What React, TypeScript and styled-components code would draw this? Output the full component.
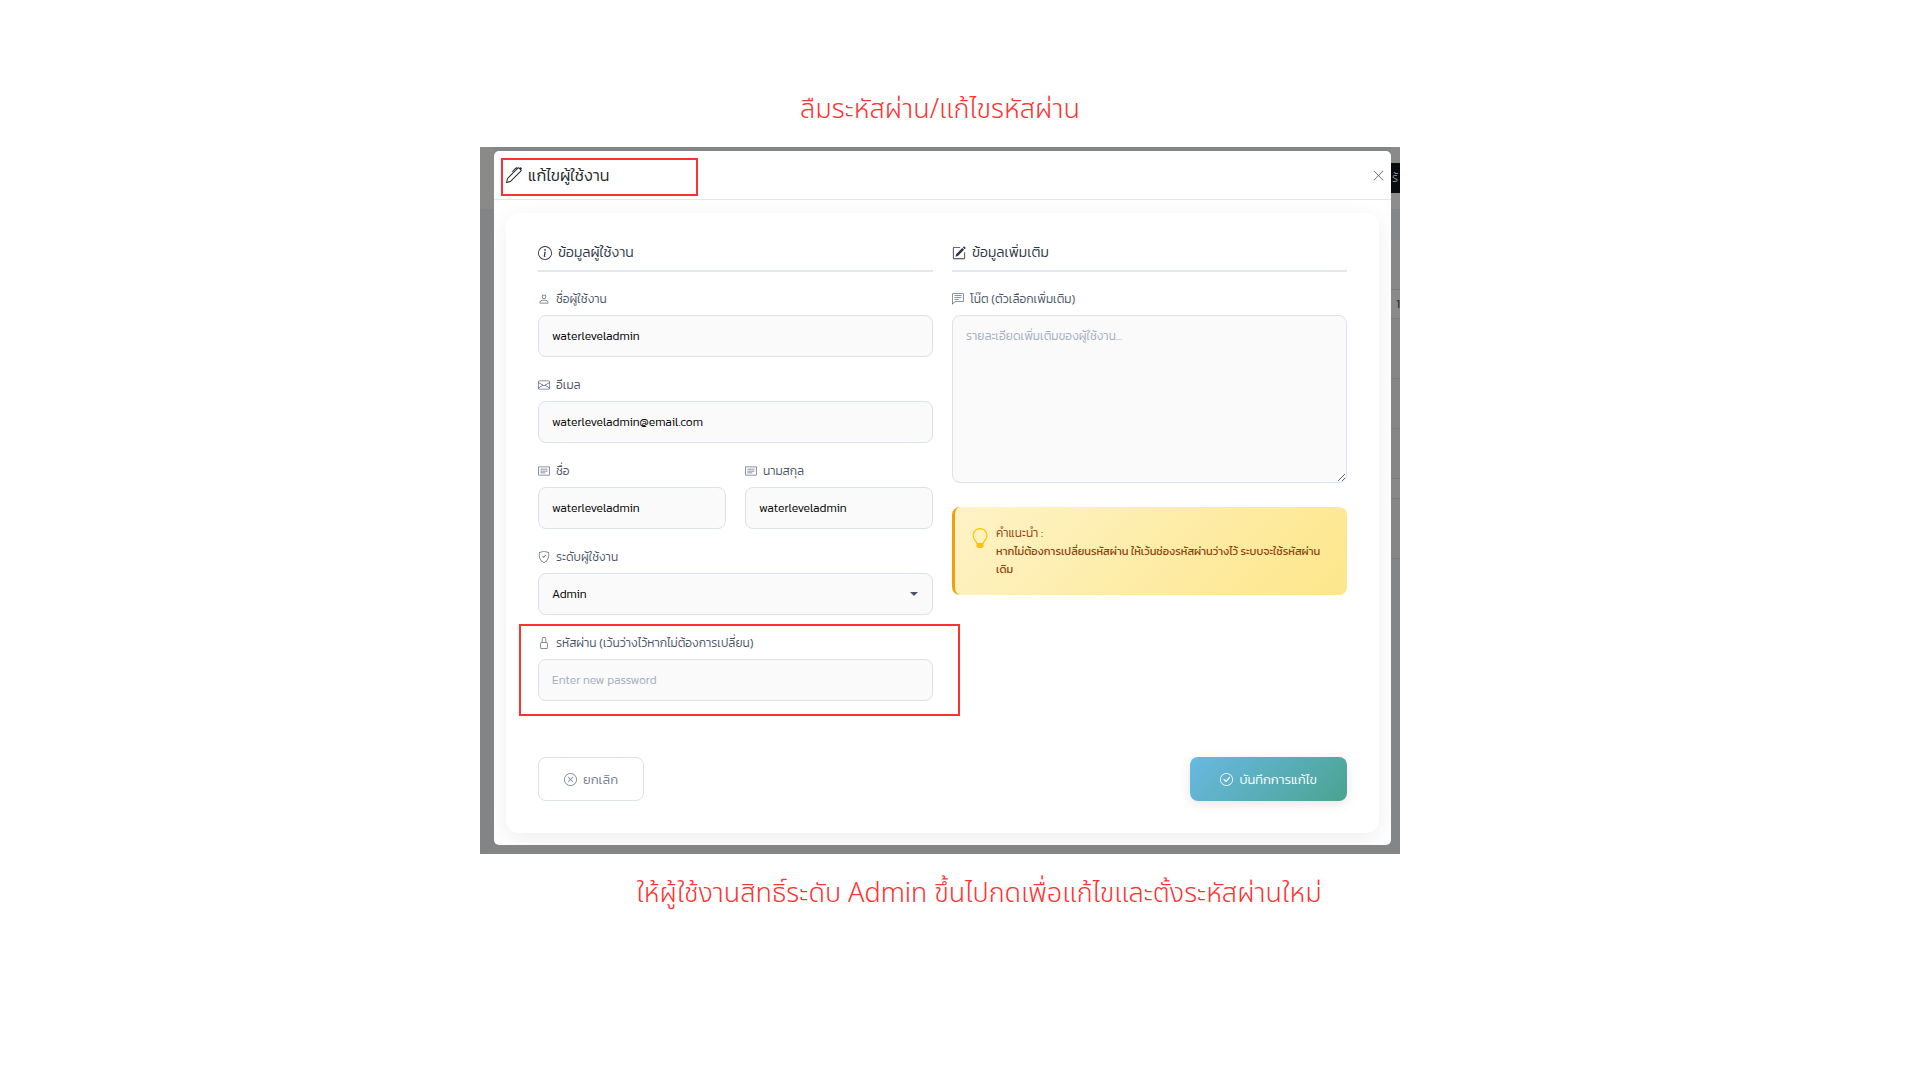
import React, { useState } from 'react';
import styled, { createGlobalStyle } from 'styled-components';
import {
  BsCardText,
  BsChatLeftText,
  BsCheckCircle,
  BsEnvelope,
  BsInfoCircle,
  BsLightbulb,
  BsLock,
  BsPen,
  BsPencilSquare,
  BsPerson,
  BsShieldCheck,
  BsXCircle,
  BsXLg,
} from 'react-icons/bs';

const uiFont = `Kanit, 'Noto Sans Thai', 'Noto Sans', sans-serif`;
const captionFont = `'Noto Sans Thai', 'Noto Sans', sans-serif`;
const red = '#ff3131';

const GlobalStyle = createGlobalStyle`
  *, *::before, *::after { box-sizing: border-box; }
  body { margin: 0; background: #fff; font-family: ${uiFont}; font-weight: 300; }
  input, select, textarea, button { font-family: inherit; font-weight: inherit; }
`;

const Page = styled.main`
  display: flex;
  flex-direction: column;
  align-items: center;
  padding: 90px 40px 40px 0;
`;

const Caption = styled.p<{ $shift?: boolean }>`
  margin: 0;
  padding-left: ${({ $shift }) => ($shift ? '78px' : '0')};
  color: ${red};
  font-family: ${captionFont};
  font-size: 27px;
  font-weight: 350;
  line-height: 40px;
`;

const Backdrop = styled.section`
  display: flex;
  width: 100%;
  max-width: 920px;
  margin: 17px 0 20px;
  background: #848586;
`;

const LeftStrip = styled.div`
  flex: 0 0 14px;
  background: linear-gradient(#8a8a89 0 62px, #838485 62px);
`;

const RightStrip = styled.div`
  display: flex;
  flex: 0 0 9px;
  flex-direction: column;
`;

const StripCell = styled.div<{ $height: number; $color: string; $line?: boolean }>`
  display: flex;
  align-items: center;
  justify-content: flex-end;
  height: ${({ $height }) => $height}px;
  background: ${({ $color }) => $color};
  border-bottom: ${({ $line }) => ($line ? '1px solid #7c7c7c' : '0')};
  color: #333;
  font-size: 12px;
  font-weight: 400;
`;

const StripButton = styled.button`
  flex: none;
  height: 30px;
  padding: 0 0 0 1px;
  border: 0;
  background: #080c10;
  color: #8d8d8d;
  font-size: 12px;
  text-align: left;
`;

const Modal = styled.div`
  flex: 1;
  min-width: 0;
  margin: 4px 0 9px;
  overflow: hidden;
  border-radius: 5px;
  background: #fff;
`;

const Header = styled.header`
  display: flex;
  align-items: flex-start;
  justify-content: space-between;
  padding: 7px 6px 3px 7px;
  border-bottom: 1px solid #e4e6e9;
`;

const Title = styled.h1`
  display: flex;
  align-items: center;
  gap: 6px;
  width: 197px;
  height: 38px;
  margin: 0;
  padding: 0 3px 4px;
  border: 2px solid ${red};
  color: #212529;
  font-size: 16px;
  font-weight: 300;
`;

const CloseButton = styled.button`
  display: flex;
  padding: 11px 0;
  border: 0;
  background: none;
  color: #707070;
  font-size: 13px;
`;

const Card = styled.form`
  margin: 13px 12px 12px;
  padding: 29px 32px 32px;
  border-radius: 13px;
  background: #fff;
  box-shadow: 0 6px 24px rgba(0, 0, 0, 0.07);
`;

const Columns = styled.div`
  display: grid;
  grid-template-columns: 1fr 1fr;
  gap: 19px;
`;

const Column = styled.div`
  display: flex;
  flex-direction: column;
  gap: 18px;
  min-width: 0;
`;

const SectionTitle = styled.h2`
  display: flex;
  align-items: center;
  gap: 6px;
  margin: 0 0 -1px;
  padding-bottom: 6px;
  border-bottom: 2px solid #e2e8f0;
  color: #2d3748;
  font-size: 14px;
  font-weight: 300;
  line-height: 22px;
`;

const FieldBox = styled.div`
  position: relative;
  display: flex;
  flex-direction: column;
  gap: 6px;
  min-width: 0;
`;

const Label = styled.label`
  display: flex;
  align-items: center;
  gap: 6px;
  color: #4a5568;
  font-size: 12px;
  line-height: 20px;

  svg { color: #667085; }
`;

const controlStyle = `
  width: 100%;
  min-width: 0;
  border: 1px solid #d9e2ed;
  border-radius: 8px;
  background: #fafafa;
  color: #000;
  font-size: 12px;
  outline: none;
  &::placeholder { color: #a0aec0; opacity: 1; }
`;

const Input = styled.input`
  ${controlStyle}
  height: 42px;
  padding: 0 13px;
`;

const TextArea = styled.textarea`
  ${controlStyle}
  display: block;
  height: 168px;
  padding: 11px 13px;
  line-height: 18px;
  resize: vertical;
`;

const SelectBox = styled.div`
  display: grid;
  align-items: center;
  > * { grid-area: 1 / 1; }
`;

const Select = styled.select`
  ${controlStyle}
  height: 42px;
  padding: 0 13px;
  appearance: none;
`;

const Caret = styled.svg`
  justify-self: end;
  width: 8px;
  height: 4px;
  margin-right: 15px;
  pointer-events: none;
`;

const Highlight = styled.div`
  position: absolute;
  inset: -9px -27px -15px -19px;
  border: 2px solid ${red};
  pointer-events: none;
`;

const Tip = styled.aside`
  display: flex;
  gap: 6px;
  margin-top: 6px;
  padding: 17px 16px 17px 15px;
  border-left: 3px solid #f59e0b;
  border-radius: 8px;
  background: linear-gradient(135deg, #fef3c7, #fde68a) border-box;
  color: #92400e;
  font-size: 12px;
  line-height: 18px;
`;

const TipIcon = styled(BsLightbulb)`
  flex: none;
  margin-top: 4px;
  color: #ffc107;
  font-size: 20px;
`;

const TipText = styled.p`
  margin: 0;
  font-size: 11px;
  font-weight: 400;
`;

const TipTitle = styled.strong`
  display: block;
  font-size: 12px;
  font-weight: 300;
`;

const Actions = styled.footer`
  display: flex;
  justify-content: space-between;
  margin-top: 56px;
`;

const Button = styled.button<{ $primary?: boolean }>`
  display: flex;
  align-items: center;
  gap: 6px;
  height: 44px;
  padding: 0 ${({ $primary }) => ($primary ? '30px' : '25px')};
  border: ${({ $primary }) => ($primary ? '0' : '1px solid #d9e2ed')};
  border-radius: 8px;
  background: ${({ $primary }) =>
    $primary ? 'linear-gradient(135deg, #69b9e2, #4aa391)' : '#fff'};
  box-shadow: ${({ $primary }) => ($primary ? '0 3px 12px rgba(0, 0, 0, 0.1)' : 'none')};
  color: ${({ $primary }) => ($primary ? '#fff' : '#718096')};
  font-size: 13px;
`;

type FieldProps = {
  id: string;
  label: string;
  icon: React.ReactNode;
  highlighted?: boolean;
  children: React.ReactNode;
};

function Field({ id, label, icon, highlighted, children }: FieldProps) {
  return (
    <FieldBox>
      <Label htmlFor={id}>
        {icon}
        {label}
      </Label>
      {children}
      {highlighted && <Highlight />}
    </FieldBox>
  );
}

export default function App() {
  const [role, setRole] = useState('Admin');

  return (
    <Page>
      <GlobalStyle />
      <Caption>ลืมระหัสผ่าน/แก้ไขรหัสผ่าน</Caption>
      <Backdrop>
        <LeftStrip />
        <Modal role="dialog" aria-labelledby="dialog-title">
          <Header>
            <Title id="dialog-title">
              <BsPen />
              แก้ไขผู้ใช้งาน
            </Title>
            <CloseButton type="button" aria-label="ปิด">
              <BsXLg />
            </CloseButton>
          </Header>
          <Card onSubmit={(event) => event.preventDefault()}>
            <Columns>
              <Column>
                <SectionTitle>
                  <BsInfoCircle />
                  ข้อมูลผู้ใช้งาน
                </SectionTitle>
                <Field id="username" label="ชื่อผู้ใช้งาน" icon={<BsPerson />}>
                  <Input id="username" defaultValue="waterleveladmin" />
                </Field>
                <Field id="email" label="อีเมล" icon={<BsEnvelope />}>
                  <Input id="email" type="email" defaultValue="waterleveladmin@email.com" />
                </Field>
                <Columns>
                  <Field id="first" label="ชื่อ" icon={<BsCardText />}>
                    <Input id="first" defaultValue="waterleveladmin" />
                  </Field>
                  <Field id="last" label="นามสกุล" icon={<BsCardText />}>
                    <Input id="last" defaultValue="waterleveladmin" />
                  </Field>
                </Columns>
                <Field id="role" label="ระดับผู้ใช้งาน" icon={<BsShieldCheck />}>
                  <SelectBox>
                    <Select id="role" value={role} onChange={(e) => setRole(e.target.value)}>
                      <option>Admin</option>
                    </Select>
                    <Caret viewBox="0 0 8 4" aria-hidden="true">
                      <path d="M0 0h8L4 4z" fill="#4a5568" />
                    </Caret>
                  </SelectBox>
                </Field>
                <Field
                  id="password"
                  label="รหัสผ่าน (เว้นว่างไว้หากไม่ต้องการเปลี่ยน)"
                  icon={<BsLock />}
                  highlighted
                >
                  <Input id="password" type="password" placeholder="Enter new password" />
                </Field>
              </Column>
              <Column>
                <SectionTitle>
                  <BsPencilSquare />
                  ข้อมูลเพิ่มเติม
                </SectionTitle>
                <Field id="note" label="โน๊ต (ตัวเลือกเพิ่มเติม)" icon={<BsChatLeftText />}>
                  <TextArea id="note" placeholder="รายละเอียดเพิ่มเติมของผู้ใช้งาน..." />
                </Field>
                <Tip>
                  <TipIcon />
                  <TipText>
                    <TipTitle>คำแนะนำ :</TipTitle>
                    หากไม่ต้องการเปลี่ยนรหัสผ่าน ให้เว้นช่องรหัสผ่านว่างไว้ ระบบจะใช้รหัสผ่านเดิม
                  </TipText>
                </Tip>
              </Column>
            </Columns>
            <Actions>
              <Button type="button">
                <BsXCircle />
                ยกเลิก
              </Button>
              <Button type="submit" $primary>
                <BsCheckCircle />
                บันทึกการแก้ไข
              </Button>
            </Actions>
          </Card>
        </Modal>
        <RightStrip>
          <StripCell $height={16} $color="#8a8a8a" />
          <StripButton type="button">ร้</StripButton>
          <StripCell $height={16} $color="#8d8d8d" />
          <StripCell $height={31} $color="#84878a" />
          <StripCell $height={50} $color="#888" $line />
          <StripCell $height={29} $color="#8a8a8a" $line>
            1
          </StripCell>
          <StripCell $height={60} $color="#868686" $line />
          <StripCell $height={50} $color="#868686" $line />
          <StripCell $height={50} $color="#868686" $line />
          <StripCell $height={20} $color="#888" $line />
          <StripCell $height={60} $color="#868686" $line />
        </RightStrip>
      </Backdrop>
      <Caption $shift>
        ให้ผู้ใช้งานสิทธิ์ระดับ Admin ขึ้นไปกดเพื่อแก้ไขและตั้งระหัสผ่านใหม่
      </Caption>
    </Page>
  );
}
